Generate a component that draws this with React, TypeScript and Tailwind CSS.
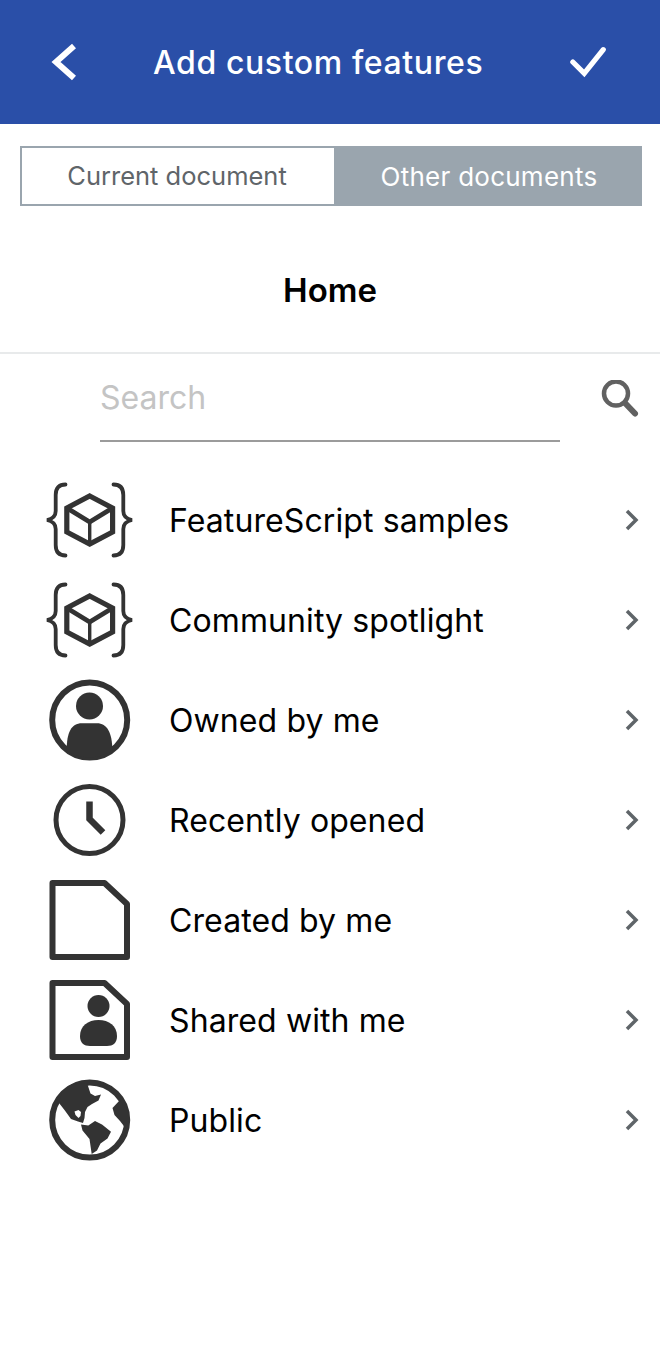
import React from 'react';

const ink = '#333333';

function CubeIcon() {
  return (
    <svg viewBox="0 0 90 90" className="w-[90px] h-[90px]" fill="none" stroke={ink} strokeLinejoin="miter">
      <path d="M20.5 9.5C14 9.5 10.7 13 10.7 20V36C10.7 41 7 44 2 45C7 46 10.7 49 10.7 54V70C10.7 77 14 80.5 20.5 80.5" strokeWidth="3.8" strokeLinecap="round" />
      <path d="M68.5 9.5C75 9.5 78.3 13 78.3 20V36C78.3 41 82 44 87 45C82 46 78.3 49 78.3 54V70C78.3 77 75 80.5 68.5 80.5" strokeWidth="3.8" strokeLinecap="round" />
      <path d="M44.7 21L67.6 33V57L44.7 69L21.8 57V33Z" strokeWidth="5.2" />
      <path d="M21.8 33L44.7 47L67.6 33" strokeWidth="4.8" />
      <path d="M44.7 47V69" strokeWidth="3.4" />
    </svg>
  );
}

function PersonCircleIcon() {
  return (
    <svg viewBox="0 0 90 90" className="w-[90px] h-[90px]">
      <circle cx="44.7" cy="45" r="37.5" fill="none" stroke={ink} strokeWidth="6" />
      <circle cx="44.5" cy="31" r="13.5" fill={ink} />
      <path d="M21.7 75C21.7 58 26 48.3 37 48.3H52C62 48.3 67.3 58 67.3 75A38 38 0 0 1 21.7 75Z" fill={ink} />
    </svg>
  );
}

function ClockIcon() {
  return (
    <svg viewBox="0 0 90 90" className="w-[90px] h-[90px]" fill="none" stroke={ink}>
      <circle cx="44.5" cy="45" r="33.5" strokeWidth="5" />
      <path d="M44.5 26.5V44L58 57.5" strokeWidth="6.5" />
    </svg>
  );
}

function DocumentIcon() {
  return (
    <svg viewBox="0 0 90 90" className="w-[90px] h-[90px]" fill="none" stroke={ink} strokeWidth="6" strokeLinejoin="round">
      <path d="M7.5 8H59.5L82 29V82H7.5Z" />
    </svg>
  );
}

function SharedIcon() {
  return (
    <svg viewBox="0 0 90 90" className="w-[90px] h-[90px]">
      <path d="M7.5 8H59.5L82 29V82H7.5Z" fill="none" stroke={ink} strokeWidth="6" strokeLinejoin="round" />
      <circle cx="53.5" cy="31" r="11" fill={ink} />
      <path d="M35 61C35 51 43 45 53.5 45C64 45 72 51 72 61C72 68 68 71 62 71H45C39 71 35 68 35 61Z" fill={ink} />
    </svg>
  );
}

function GlobeIcon() {
  return (
    <svg viewBox="0 0 90 90" className="w-[90px] h-[90px]">
      <circle cx="44.7" cy="45" r="37.5" fill="none" stroke={ink} strokeWidth="6" />
      {/* americas */}
      <path d="M42 8L45.5 18.5L50 21L56 19.5L53.5 25.5L47 29L42.5 32L40 37L39.5 43L38 48L33 46.5L26 44L19.5 35L14 28L17 17L27 9Z" fill={ink} />
      <path d="M29.5 36.5L33.5 35L36 37L35.5 41L33.5 43L30.5 40Z" fill="white" />
      <path d="M36 49.5L43.3 50.5L50 46L57 49.5L66 56.7L62.5 63.5L55.5 68.5L52 75.5L46.7 79L44.5 64L37.5 55.5Z" fill={ink} />
      {/* right side landmass */}
      <path d="M67.5 33L75 25L84 38L82 55L75 46L69.5 40Z" fill={ink} />
    </svg>
  );
}

const rows = [
  { label: 'FeatureScript samples', icon: CubeIcon },
  { label: 'Community spotlight', icon: CubeIcon },
  { label: 'Owned by me', icon: PersonCircleIcon },
  { label: 'Recently opened', icon: ClockIcon },
  { label: 'Created by me', icon: DocumentIcon },
  { label: 'Shared with me', icon: SharedIcon },
  { label: 'Public', icon: GlobeIcon },
];

export default function App() {
  return (
    <div className="w-[660px] h-[1366px] bg-white overflow-hidden font-['Inter',sans-serif]">
      {/* Header */}
      <div className="h-[124px] bg-[#2a4fa8] flex items-center text-white">
        <svg viewBox="0 0 30 40" className="ml-[50px] w-[30px] h-[40px] shrink-0" fill="none" stroke="white" strokeWidth="6">
          <path d="M24 4L6 20L24 36" />
        </svg>
        <div className="ml-[73px] pt-[1px] text-[32px] tracking-[0.6px] font-medium leading-none whitespace-nowrap">Add custom features</div>
        <svg viewBox="0 0 40 34" className="ml-auto mr-[52px] w-[38px] h-[34px] shrink-0" fill="none" stroke="white" strokeWidth="5.5" strokeLinecap="round">
          <path d="M3 17L15 29L35 4" />
        </svg>
      </div>

      {/* Tabs */}
      <div className="mt-[22px] ml-[20px] w-[622px] h-[60px] flex">
        <div className="w-[314px] border-2 border-r-0 border-[#9aa5ae] pr-[2px] flex items-center justify-center text-[25.5px] text-[#5f6569]">Current document</div>
        <div className="flex-1 bg-[#9aa5ae] pl-[2px] flex items-center justify-center text-[26px] tracking-[0.25px] text-white">Other documents</div>
      </div>

      {/* Title */}
      <div className="h-[148px] pt-[62px] border-b-2 border-[#e8eaeb] text-center text-[33px] leading-[44px] font-semibold text-black">Home</div>

      {/* Search */}
      <div className="flex h-[88px]">
        <div className="ml-[100px] w-[460px] border-b-2 border-[#9b9b9b] pt-[24px] text-[32px] leading-[40px] text-[#c4c4c4]">Search</div>
        <svg viewBox="0 0 40 40" className="ml-[40px] mt-[26px] w-[40px] h-[40px]" fill="none" stroke="#616161">
          <circle cx="16" cy="13.5" r="12" strokeWidth="4.5" />
          <path d="M25 23L35 33.5" strokeWidth="6" strokeLinecap="round" />
        </svg>
      </div>

      {/* List */}
      <div className="mt-[28px]">
        {rows.map((row) => {
          const Icon = row.icon;
          return (
            <div key={row.label} className="h-[100px] flex items-center">
              <div className="ml-[45px] w-[90px] h-[90px] shrink-0">
                <Icon />
              </div>
              <div className="ml-[34px] pt-[1px] text-[32px] tracking-[0.1px] leading-none text-black whitespace-nowrap">{row.label}</div>
              <svg viewBox="0 0 16 24" className="ml-auto mr-[20px] w-[16px] h-[24px] shrink-0" fill="none" stroke="#5f6569" strokeWidth="3.5">
                <path d="M3 3L12 12L3 21" />
              </svg>
            </div>
          );
        })}
      </div>
    </div>
  );
}
